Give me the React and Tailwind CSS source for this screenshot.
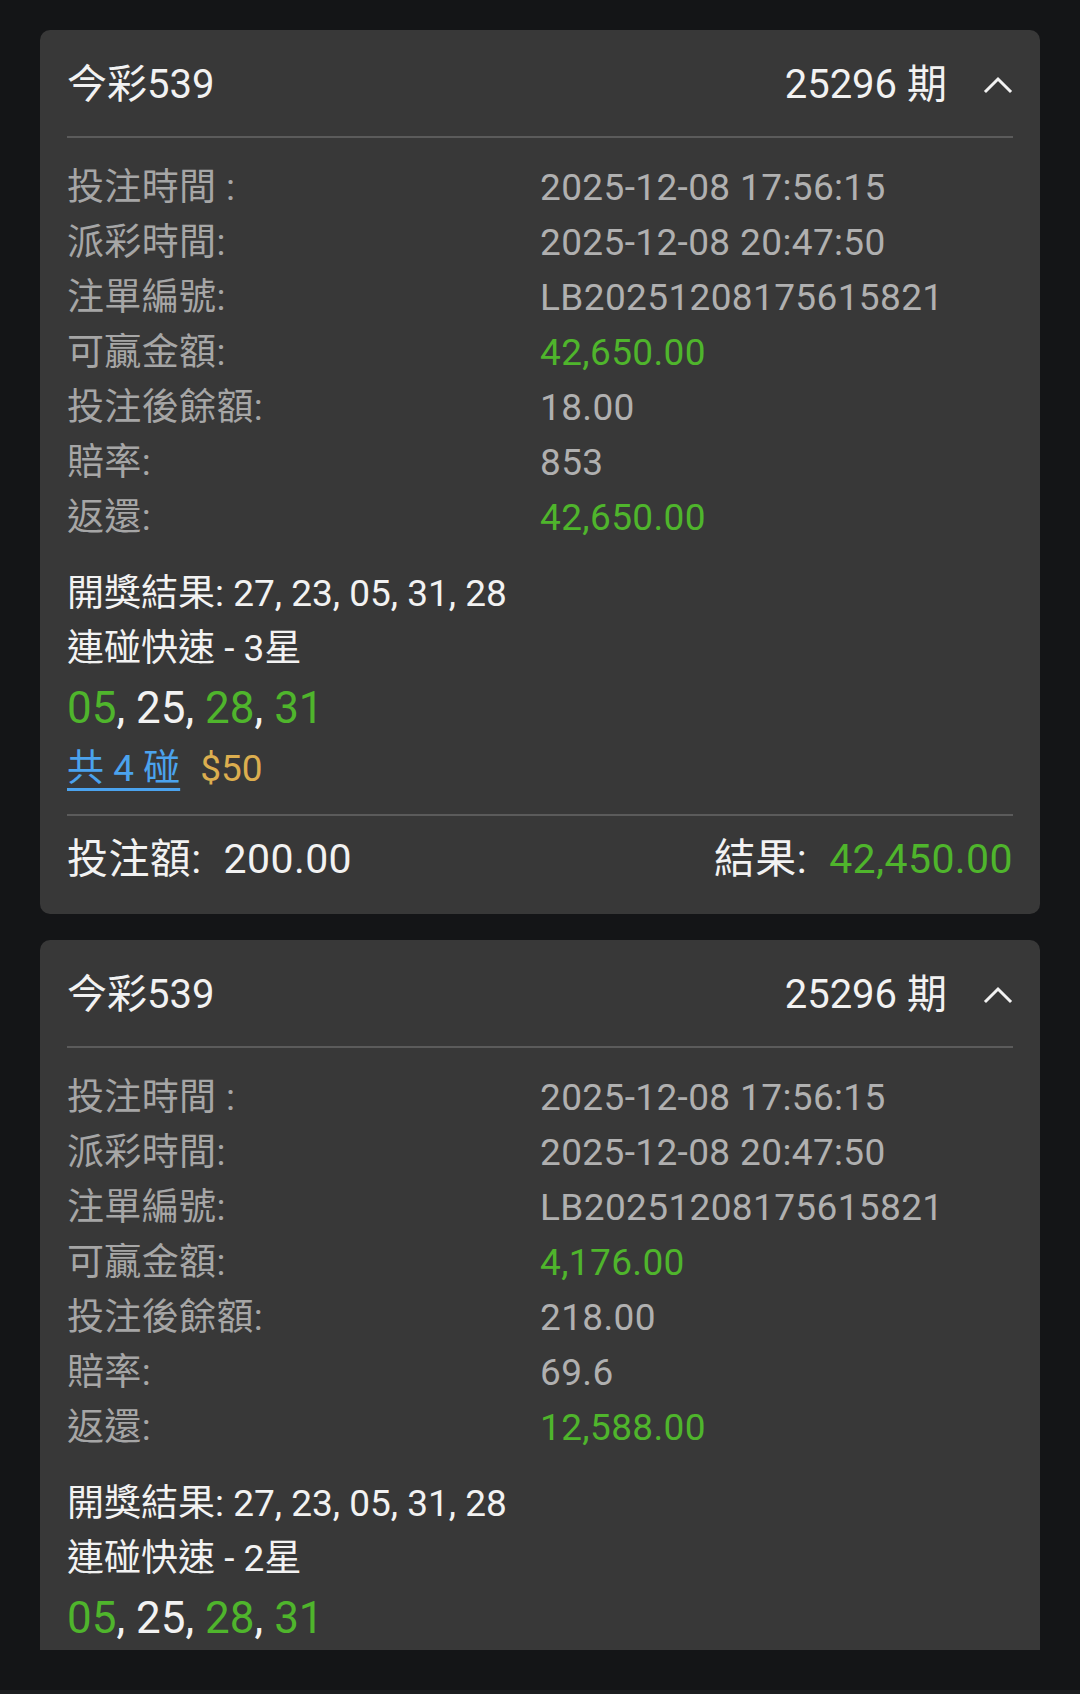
import { memo } from 'react';

const FONT = "font-['Roboto','Noto_Sans_CJK_TC',sans-serif]";

// Chevron (collapse) icon
const ChevronUp = memo(() => (
  <svg width="30" height="18" viewBox="0 0 30 18" fill="none" stroke="#f2f2f2" strokeWidth={3} strokeLinecap="square">
    <polyline points="3,15 15,3 27,15" />
  </svg>
));
ChevronUp.displayName = 'ChevronUp';

const green = 'text-[#4fb52c]';

const Row = ({ label, value, accent }) => (
  <div className="grid grid-cols-2 h-[55px] items-center text-[37px] leading-[55px] tracking-[0.01em]">
    <span className="text-[#a6a6a6]">{label}</span>
    <span className={accent ? green : 'text-[#b0b0b0]'}>{value}</span>
  </div>
);

const BetCard = ({ bet }) => (
  <section className="bg-[#383838] rounded-[10px] px-[27px] text-[#f2f2f2]">
    {/* Header */}
    <header className="h-[106px] flex items-center justify-between pt-[3px]">
      <h2 className="text-[40px] leading-none">今彩539</h2>
      <div className="flex items-center">
        <span className="text-[40px] leading-none">25296 期</span>
        <span className="ml-[36px] flex items-center"><ChevronUp /></span>
      </div>
    </header>
    <div className="h-[2px] bg-[#5b5b5b]" />

    {/* Details */}
    <div className="pt-[22px]">
      <Row label="投注時間 :" value="2025-12-08 17:56:15" />
      <Row label="派彩時間:" value="2025-12-08 20:47:50" />
      <Row label="注單編號:" value="LB20251208175615821" />
      <Row label="可贏金額:" value={bet.win} accent />
      <Row label="投注後餘額:" value={bet.balance} />
      <Row label="賠率:" value={bet.odds} />
      <Row label="返還:" value={bet.refund} accent />
    </div>

    {/* Draw result */}
    <div className="pt-[21px]">
      <p className="text-[37px] leading-[55px]">開獎結果: 27, 23, 05, 31, 28</p>
      <p className="text-[37px] leading-[55px]">連碰快速 - {bet.stars}星</p>
      <p className="text-[44px] leading-[64px]">
        <span className={green}>05</span>, 25, <span className={green}>28</span>, <span className={green}>31</span>
      </p>
      {bet.showCount && (
        <p className="mt-[1px] text-[37px] leading-[55px]">
          <span className="text-[#4ba3ee] underline underline-offset-[7px] decoration-[3px]">共 4 碰</span>
          <span className="ml-[20px] text-[#dcae4f]">$50</span>
        </p>
      )}
    </div>

    {bet.showFooter && (
      <>
        <div className="mt-[18px] h-[2px] bg-[#5b5b5b]" />
        <footer className="pt-[17px] pb-[29px] flex items-center justify-between text-[41px] leading-[52px] tracking-[0.01em]">
          <div>投注額:<span className="ml-[22px]">200.00</span></div>
          <div>結果:<span className={`ml-[22px] ${green}`}>{bet.result}</span></div>
        </footer>
      </>
    )}
  </section>
);

const bets = [
  { win: '42,650.00', balance: '18.00', odds: '853', refund: '42,650.00', stars: 3, showCount: true, showFooter: true, result: '42,450.00' },
  { win: '4,176.00', balance: '218.00', odds: '69.6', refund: '12,588.00', stars: 2, showCount: true, showFooter: true, result: '12,388.00' },
];

export default function App() {
  return (
    <main className={`${FONT} w-[1080px] h-[1694px] bg-[#141517] flex flex-col`}>
      <div className="h-[1650px] overflow-hidden px-[40px] pt-[30px] flex flex-col gap-[26px]">
        {bets.map((bet, i) => <BetCard key={i} bet={bet} />)}
      </div>
      <div className="flex-1" />
      <div className="h-[4px] bg-[#1c1d1f]" />
    </main>
  );
}
